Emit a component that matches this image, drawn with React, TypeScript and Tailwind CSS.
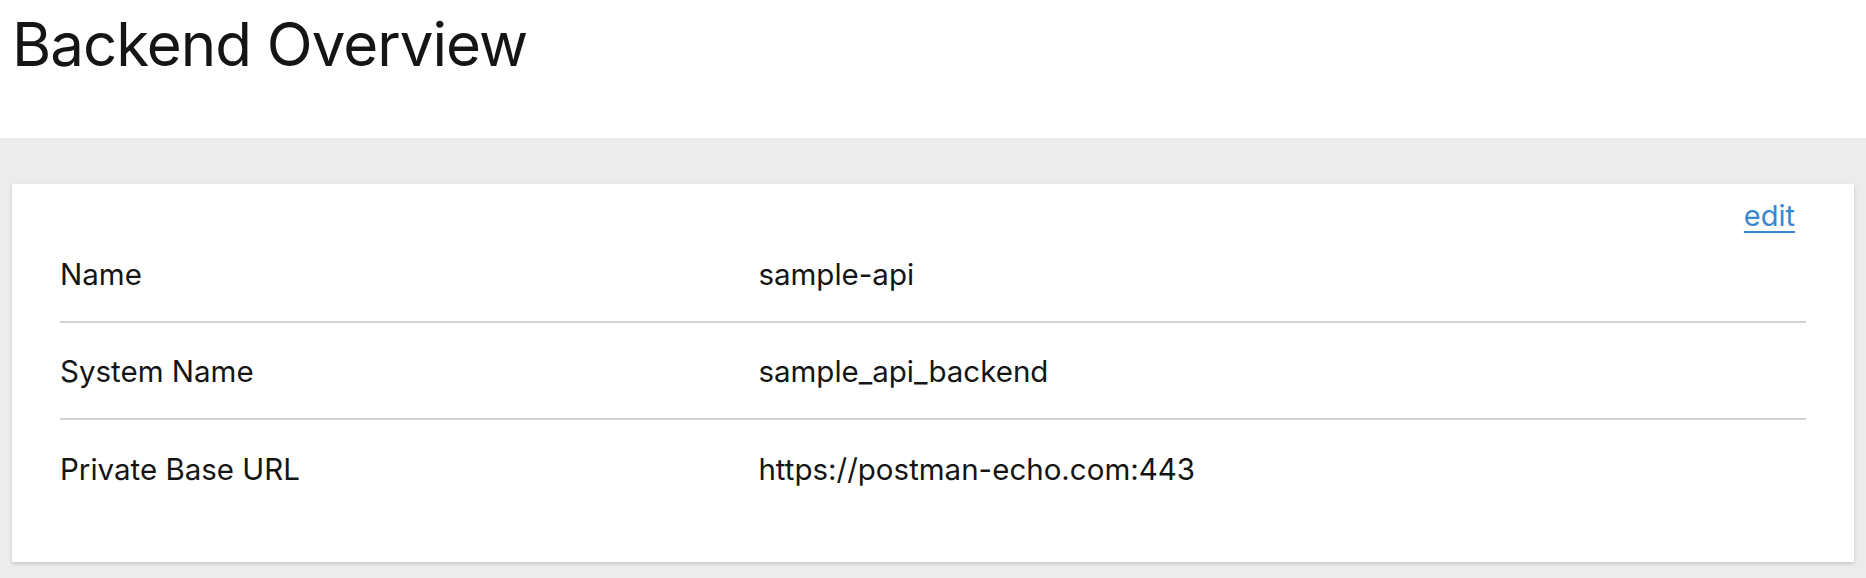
import React from "react";

const rows: { label: string; value: string }[] = [
  { label: "Name", value: "sample-api" },
  { label: "System Name", value: "sample_api_backend" },
  { label: "Private Base URL", value: "https://postman-echo.com:443" },
];

export default function App() {
  return (
    <div
      className="w-[1866px] h-[578px] bg-[#ececec] flex flex-col text-[#151515]"
      style={{ fontFamily: "Inter, 'Noto Sans', 'Liberation Sans', sans-serif" }}
    >
      <header className="h-[138px] bg-white pl-[12px] pt-[14px] shrink-0">
        <h1 className="text-[60px] leading-none font-normal tracking-[-1px] text-[#151515]">
          Backend Overview
        </h1>
      </header>
      <main className="px-[12px] pt-[46px]">
        <section className="bg-white shadow-[0_2px_4px_rgba(0,0,0,0.16)] h-[378px] px-[48px]">
          <div className="h-[42px] pt-[17px] flex justify-end pr-[11px] leading-none">
            <a
              href="#"
              className="text-[29px] leading-none text-[#3a87d0] underline decoration-2 underline-offset-[5px]"
            >
              edit
            </a>
          </div>
          <dl className="flex flex-col">
            {rows.map((r, i) => (
              <div
                key={r.label}
                className={
                  "grid grid-cols-[2fr_3fr] items-center h-[97px] pt-[3px] text-[29.5px] leading-none " +
                  (i < rows.length - 1 ? "border-b-2 border-[#d2d2d2]" : "")
                }
              >
                <dt>{r.label}</dt>
                <dd>{r.value}</dd>
              </div>
            ))}
          </dl>
        </section>
      </main>
    </div>
  );
}
